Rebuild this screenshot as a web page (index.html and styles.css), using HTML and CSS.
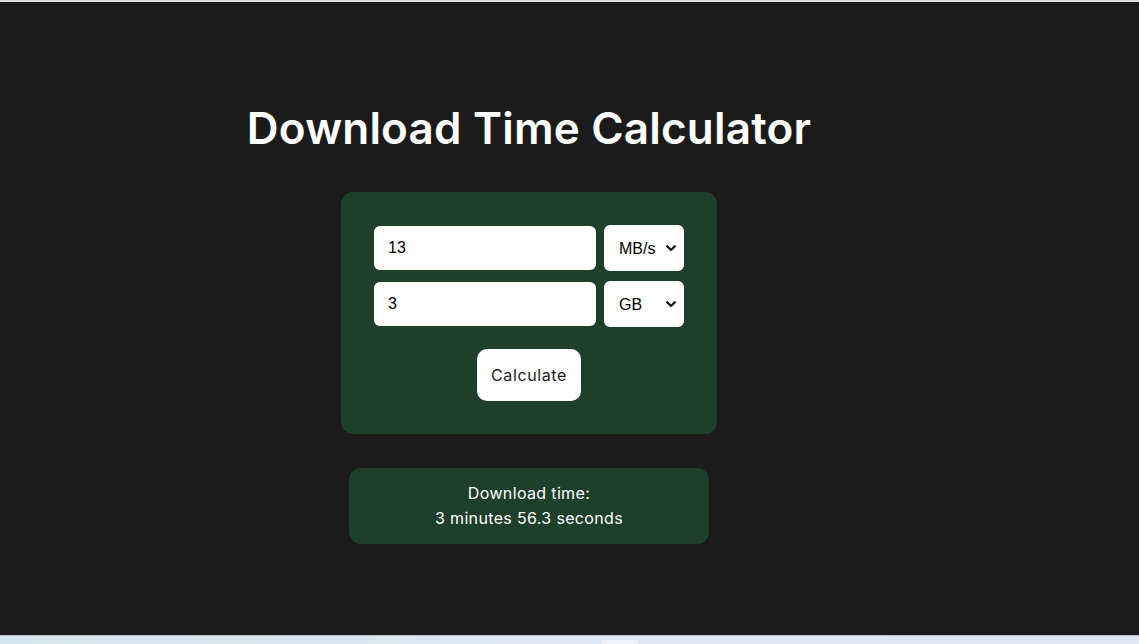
FILE: index.html
```html
<!DOCTYPE html>
<html lang="en">
<head>
<meta charset="utf-8">
<title>Download Time Calculator</title>
<link rel="stylesheet" href="styles.css">
</head>
<body>
<div class="topline"></div>
<main class="page">
  <div class="column">
    <h1 class="title">Download Time Calculator</h1>
    <form class="card">
      <div class="row">
        <input class="field" type="text" value="13">
        <div class="select-wrap">
          <select class="unit"><option>MB/s</option></select>
          <svg class="chev" width="10" height="7" viewBox="0 0 10 7"><path d="M1.2 1.2 L5 5 L8.8 1.2" fill="none" stroke="#111" stroke-width="2.2" stroke-linecap="round" stroke-linejoin="round"/></svg>
        </div>
      </div>
      <div class="row">
        <input class="field" type="text" value="3">
        <div class="select-wrap">
          <select class="unit"><option>GB</option></select>
          <svg class="chev" width="10" height="7" viewBox="0 0 10 7"><path d="M1.2 1.2 L5 5 L8.8 1.2" fill="none" stroke="#111" stroke-width="2.2" stroke-linecap="round" stroke-linejoin="round"/></svg>
        </div>
      </div>
      <button class="calc" type="button">Calculate</button>
    </form>
    <div class="result">
      <p>Download time:</p>
      <p>3 minutes 56.3 seconds</p>
    </div>
  </div>
</main>
<div class="taskbar"><span class="tab"></span></div>
</body>
</html>
```

FILE: styles.css
```css
html, body {
  margin: 0;
  padding: 0;
  background: #1b1b1b;
}
body {
  height: 644px;
  overflow: hidden;
  display: flex;
  flex-direction: column;
  font-family: "Inter", "Open Sans", sans-serif;
}
.topline {
  height: 2px;
  background: #dcdcdc;
  flex: none;
}
.page {
  flex: 1;
  background: #1b1b1b;
}
.column {
  width: 1058px;
  display: flex;
  flex-direction: column;
  align-items: center;
  padding-top: 96px;
}
.title {
  margin: 0;
  color: #ffffff;
  font-weight: 600;
  font-size: 44px;
  line-height: 60px;
  letter-spacing: 0.2px;
}
.card {
  margin-top: 34px;
  width: 376px;
  box-sizing: border-box;
  padding: 33px 33px 33px;
  background: #1e3f29;
  border-radius: 12px;
  display: flex;
  flex-direction: column;
  align-items: center;
  gap: 10px;
}
.row {
  width: 100%;
  display: flex;
  align-items: center;
  gap: 8px;
}
.field {
  width: 222px;
  height: 44px;
  box-sizing: border-box;
  border: none;
  border-radius: 6px;
  padding: 0 14px;
  font-family: "Liberation Sans", Arial, sans-serif;
  font-size: 16px;
  color: #000;
  background: #fff;
  outline: none;
}
.select-wrap {
  position: relative;
  width: 80px;
  height: 46px;
}
.unit {
  appearance: none;
  -webkit-appearance: none;
  width: 80px;
  height: 46px;
  box-sizing: border-box;
  border: none;
  border-radius: 6px;
  padding: 0 26px 0 15px;
  font-family: "Liberation Sans", Arial, sans-serif;
  font-size: 16px;
  color: #000;
  background: #fff;
}
.chev {
  position: absolute;
  right: 8px;
  top: 20px;
  pointer-events: none;
}
.calc {
  margin-top: 12px;
  width: 104px;
  height: 52px;
  border: none;
  border-radius: 10px;
  background: #fff;
  color: #1b1b1b;
  font-family: "Inter", "Open Sans", sans-serif;
  font-size: 16px;
  font-weight: 400;
  letter-spacing: 0.6px;
  padding: 0;
}
.result {
  margin-top: 34px;
  width: 360px;
  height: 76px;
  box-sizing: border-box;
  padding-top: 13px;
  background: #1e3f29;
  border-radius: 12px;
  color: #fff;
  text-align: center;
  font-size: 16px;
  line-height: 25px;
  letter-spacing: 0.35px;
}
.result p {
  margin: 0;
}
.taskbar {
  height: 8px;
  flex: none;
  border-top: 1px solid #b9c6cc;
  background: linear-gradient(90deg, #d3e8ee 0%, #d9e8f0 30%, #dfe6f2 60%, #dfe8f2 100%);
  position: relative;
}
.tab {
  position: absolute;
  left: 602px;
  top: 4px;
  width: 36px;
  height: 4px;
  background: #eef2f8;
  border-radius: 3px 3px 0 0;
}
```
